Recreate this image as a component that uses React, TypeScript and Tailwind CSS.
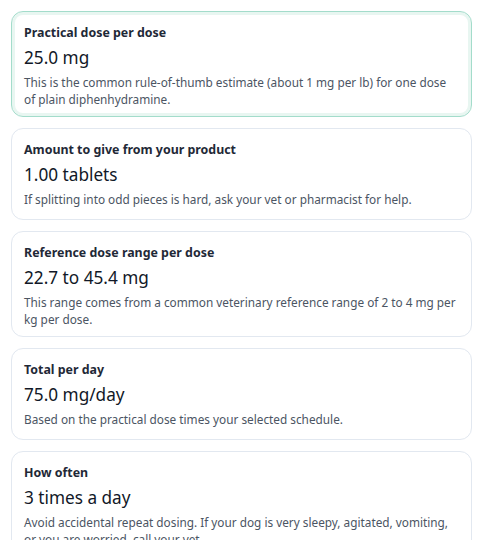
import React from "react";

type Item = {
  title: string;
  value: string;
  note: string;
  highlight?: boolean;
};

const items: Item[] = [
  {
    title: "Practical dose per dose",
    value: "25.0 mg",
    note: "This is the common rule-of-thumb estimate (about 1 mg per lb) for one dose of plain diphenhydramine.",
    highlight: true,
  },
  {
    title: "Amount to give from your product",
    value: "1.00 tablets",
    note: "If splitting into odd pieces is hard, ask your vet or pharmacist for help.",
  },
  {
    title: "Reference dose range per dose",
    value: "22.7 to 45.4 mg",
    note: "This range comes from a common veterinary reference range of 2 to 4 mg per kg per dose.",
  },
  {
    title: "Total per day",
    value: "75.0 mg/day",
    note: "Based on the practical dose times your selected schedule.",
  },
  {
    title: "How often",
    value: "3 times a day",
    note: "Avoid accidental repeat dosing. If your dog is very sleepy, agitated, vomiting, or you are worried, call your vet.",
  },
];

function ResultCard({ title, value, note, highlight }: Item) {
  return (
    <div
      className={
        highlight
          ? "min-h-[92px] rounded-xl border border-[#a3dccb] bg-white px-3 pt-[12px] pb-[8px] shadow-[inset_0_0_0_3px_#e8f6f1]"
          : "min-h-[92px] rounded-xl border border-[#e2e8f0] bg-white px-3 pt-[12px] pb-[8px]"
      }
    >
      <div className="text-[12.4px] font-bold leading-[18px] text-[#1f2937]">{title}</div>
      <div className="mt-[4px] text-[17.2px] leading-[24px] text-[#111827]">{value}</div>
      <p className="mt-[4px] text-[11.8px] leading-[17px] text-[#4b5563]">{note}</p>
    </div>
  );
}

export default function App() {
  return (
    <div
      className="flex min-h-screen flex-col gap-[11px] bg-white px-[11px] pt-[11px] pb-6"
      style={{ fontFamily: '"Noto Sans", "Open Sans", sans-serif' }}
    >
      {items.map((it) => (
        <ResultCard key={it.title} {...it} />
      ))}
    </div>
  );
}
